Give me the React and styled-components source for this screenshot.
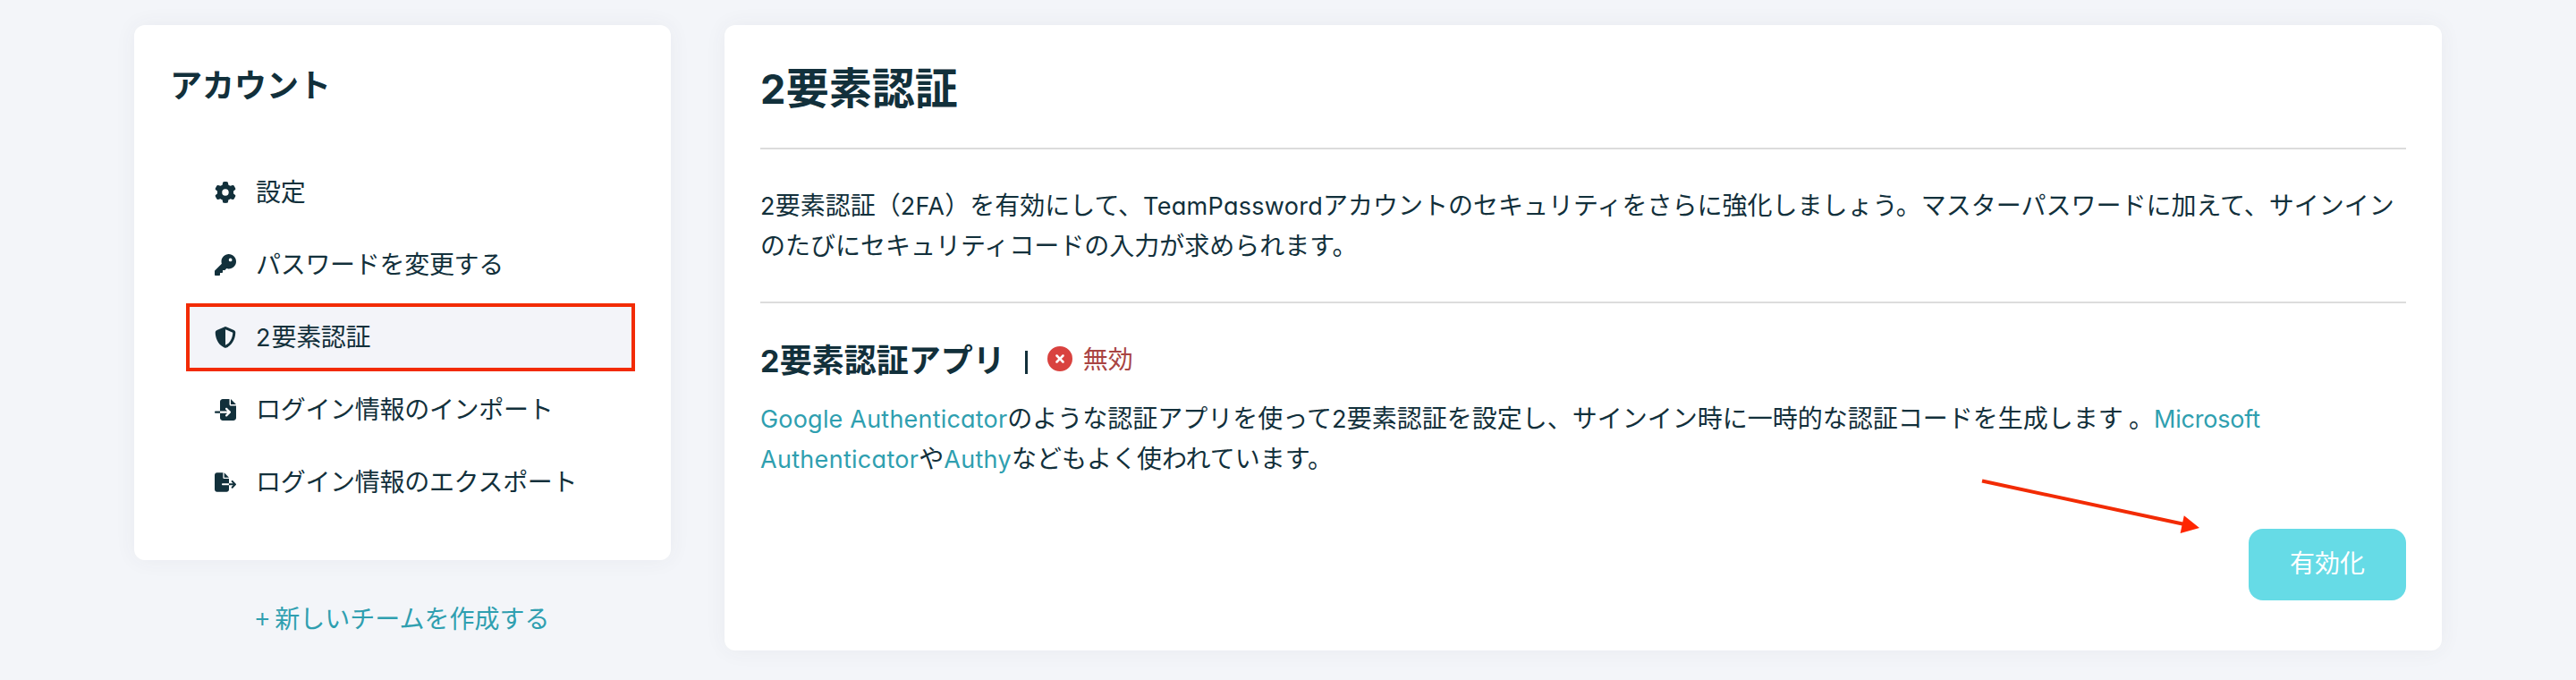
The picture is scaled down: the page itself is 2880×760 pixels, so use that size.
import React from "react";
import styled, { createGlobalStyle } from "styled-components";
import {
  FaCircleXmark,
  FaFileExport,
  FaFileImport,
  FaGear,
  FaKey,
  FaShieldHalved,
} from "react-icons/fa6";

const GlobalStyle = createGlobalStyle`
  * {
    box-sizing: border-box;
    margin: 0;
    padding: 0;
  }
  body {
    background: #f3f5f9;
    color: #12303b;
    font-family: "Noto Sans CJK JP", sans-serif;
    font-size: 28px;
    line-height: 45px;
  }
`;

const Page = styled.div`
  display: flex;
  align-items: flex-start;
  gap: 60px;
  height: 760px;
  padding: 28px 150px 0;
  overflow: hidden;
`;

const Card = styled.section`
  background: #fff;
  border-radius: 12px;
  box-shadow: 0 0 24px rgba(60, 60, 80, 0.06);
`;

const Sidebar = styled.aside`
  width: 600px;
  text-align: center;
`;

const AccountCard = styled(Card)`
  height: 598px;
  padding: 42px 40px 0;
  text-align: left;
`;

const SidebarTitle = styled.h2`
  height: 107px;
  font-size: 36px;
  font-weight: 700;
  line-height: 46px;
`;

const Menu = styled.ul`
  display: flex;
  flex-direction: column;
  gap: 5px;
  margin-left: 18px;
  list-style: none;
`;

const MenuItem = styled.li`
  display: flex;
  align-items: center;
  height: 76px;
  padding-left: 28px;
  border: 4px solid ${({ $active }) => ($active ? "#f22b04" : "transparent")};
  background: ${({ $active }) => ($active ? "#f3f4f9" : "transparent")};
`;

const MenuIcon = styled.span`
  display: flex;
  width: 46px;
  font-size: 24px;

  svg {
    flex-shrink: 0;
    width: auto;
    height: 24px;
  }
`;

const MenuLabel = styled.span`
  padding-bottom: 3px;
  letter-spacing: -0.3px;
`;

const NewTeamLink = styled.a`
  display: inline-block;
  margin-top: 42px;
  color: #2f9fb0;
`;

const Latin = styled.span`
  font-family: Inter, "Noto Sans CJK JP", sans-serif;
  font-size: ${({ $size }) => $size || "27px"};
  font-feature-settings: "cv11";
  letter-spacing: ${({ $spacing }) => $spacing || "0.3px"};
  line-height: 0;
`;

const Content = styled(Card)`
  width: 1920px;
  height: 699px;
  padding: 0 40px;
`;

const Title = styled.h1`
  height: 139px;
  padding-top: 35px;
  border-bottom: 2px solid #dcdcdc;
  font-size: 48px;
  font-weight: 700;
  line-height: 64px;
`;

const Description = styled.p`
  height: 172px;
  padding-top: 39px;
  border-bottom: 2px solid #dcdcdc;
  white-space: nowrap;
`;

const AppHeader = styled.div`
  display: flex;
  align-items: center;
  height: 46px;
  margin-top: 38px;
`;

const AppTitle = styled.h2`
  font-size: 36px;
  font-weight: 700;
`;

const Divider = styled.span`
  width: 3px;
  height: 26px;
  margin: 9px 22px 0 22px;
  background: #12303b;
`;

const Status = styled.span`
  display: flex;
  align-items: center;
  gap: 12px;
  color: #a94442;

  svg {
    margin-top: 2px;
    color: #d9423f;
  }
`;

const AppDescription = styled.p`
  margin-top: 21px;
  white-space: nowrap;
`;

const Link = styled(Latin).attrs({ as: "a" })`
  color: #2f9fb0;
`;

const Actions = styled.div`
  display: flex;
  justify-content: flex-end;
  position: relative;
  margin-top: 57px;
`;

const EnableButton = styled.button`
  width: 176px;
  height: 80px;
  padding-bottom: 5px;
  border: 0;
  border-radius: 16px;
  background: #66dbe6;
  color: #fff;
  font: inherit;
`;

// 有効化ボタンを指す矢印
const Arrow = styled.svg`
  position: absolute;
  top: -61px;
  right: 225px;
`;

const menus = [
  { icon: <FaGear />, label: "設定" },
  { icon: <FaKey />, label: "パスワードを変更する" },
  {
    icon: <FaShieldHalved />,
    label: (
      <>
        <Latin $spacing="1px">2</Latin>要素認証
      </>
    ),
    active: true,
  },
  { icon: <FaFileImport />, label: "ログイン情報のインポート" },
  { icon: <FaFileExport />, label: "ログイン情報のエクスポート" },
];

const App = () => {
  return (
    <>
      <GlobalStyle />
      <Page>
        <Sidebar>
          <AccountCard>
            <SidebarTitle>アカウント</SidebarTitle>
            <Menu>
              {menus.map(({ icon, label, active }, index) => (
                <MenuItem key={index} $active={active}>
                  <MenuIcon>{icon}</MenuIcon>
                  <MenuLabel>{label}</MenuLabel>
                </MenuItem>
              ))}
            </Menu>
          </AccountCard>
          <NewTeamLink>+ 新しいチームを作成する</NewTeamLink>
        </Sidebar>
        <Content>
          <Title>
            <Latin $size="45px">2</Latin>要素認証
          </Title>
          <Description>
            <Latin>2</Latin>要素認証（<Latin>2FA</Latin>）を有効にして、
            <Latin>TeamPassword</Latin>
            アカウントのセキュリティをさらに強化しましょう。マスターパスワードに加えて、サインイン
            <br />
            のたびにセキュリティコードの入力が求められます。
          </Description>
          <AppHeader>
            <AppTitle>
              <Latin $size="34px">2</Latin>要素認証アプリ
            </AppTitle>
            <Divider />
            <Status>
              <FaCircleXmark />
              無効
            </Status>
          </AppHeader>
          <AppDescription>
            <Link $spacing="0.2px">Google Authenticator</Link>
            のような認証アプリを使って<Latin>2</Latin>
            要素認証を設定し、サインイン時に一時的な認証コードを生成します 。
            <Link $spacing="-0.2px">Microsoft</Link>
            <br />
            <Link>Authenticator</Link>や<Link>Authy</Link>
            などもよく使われています。
          </AppDescription>
          <Actions>
            <Arrow width="250" height="70" viewBox="0 0 250 70">
              <path d="M1 7.5 L232 57" stroke="#f22b04" strokeWidth="4" />
              <path d="M244 60 L226.8 46.2 L222.6 66 Z" fill="#ff2600" />
            </Arrow>
            <EnableButton>有効化</EnableButton>
          </Actions>
        </Content>
      </Page>
    </>
  );
};

export default App;
